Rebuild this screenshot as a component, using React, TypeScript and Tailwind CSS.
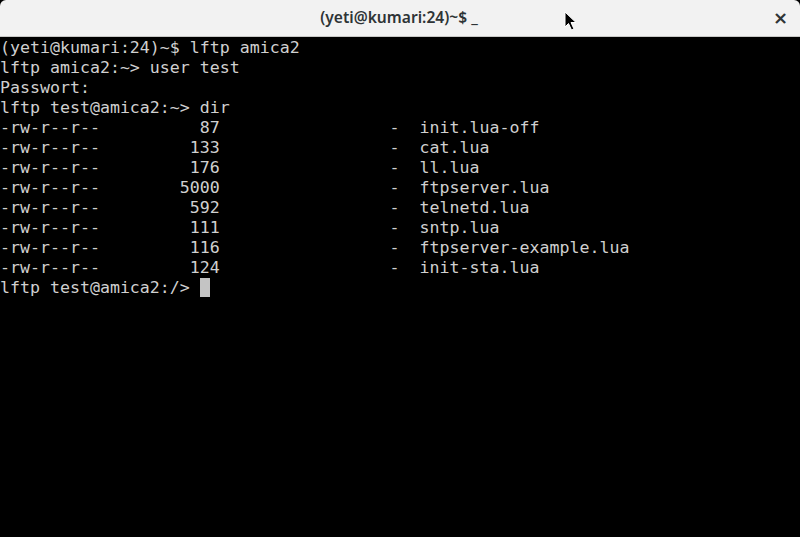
import React from "react";

const lines = [
  "(yeti@kumari:24)~$ lftp amica2",
  "lftp amica2:~> user test",
  "Passwort:",
  "lftp test@amica2:~> dir",
];

const files: [string, string][] = [
  ["87", "init.lua-off"],
  ["133", "cat.lua"],
  ["176", "ll.lua"],
  ["5000", "ftpserver.lua"],
  ["592", "telnetd.lua"],
  ["111", "sntp.lua"],
  ["116", "ftpserver-example.lua"],
  ["124", "init-sta.lua"],
];

function fileLine(size: string, name: string) {
  return "-rw-r--r--" + size.padStart(12, " ") + " ".repeat(17) + "-  " + name;
}

export default function App() {
  return (
    <div className="w-[800px] h-[537px] bg-black overflow-hidden flex flex-col relative">
      <div className="h-[37px] shrink-0 bg-[#f2f2f2] rounded-t-[6px] border-b border-[#c8c8c6] flex items-center justify-center relative">
        <span
          className="text-[15.6px] font-semibold text-[#2e3436] pr-[2px]"
          style={{ fontFamily: "'Noto Sans', 'Open Sans', sans-serif" }}
        >
          (yeti@kumari:24)~$ _
        </span>
        <span className="absolute right-[12px] top-[8px] text-[#2e3436] text-[18px] font-bold leading-[20px]"
          style={{ fontFamily: "'DejaVu Sans', sans-serif" }}>
          ×
        </span>
        <svg className="absolute left-[564px] top-[11px]" width="14" height="21" viewBox="0 0 14 21">
          <path d="M1 1 L1 16 L4.5 12.5 L7.5 19 L10 18 L7 11.5 L12 11.5 Z" fill="#000" stroke="#fff" strokeWidth="1" />
        </svg>
      </div>
      <div
        className="text-[#d0d0d0] text-[16.6px] leading-[20px] whitespace-pre pt-[1px]"
        style={{ fontFamily: "'DejaVu Sans Mono', 'Liberation Mono', monospace" }}
      >
        {lines.map((l, i) => (
          <div key={i} className="h-[20px]">{l}</div>
        ))}
        {files.map(([s, n], i) => (
          <div key={"f" + i} className="h-[20px]">{fileLine(s, n)}</div>
        ))}
        <div className="h-[20px] flex">
          <span>{"lftp test@amica2:/> "}</span>
          <span className="inline-block w-[10px] h-[19px] bg-[#c4c4c4]" />
        </div>
      </div>
    </div>
  );
}
